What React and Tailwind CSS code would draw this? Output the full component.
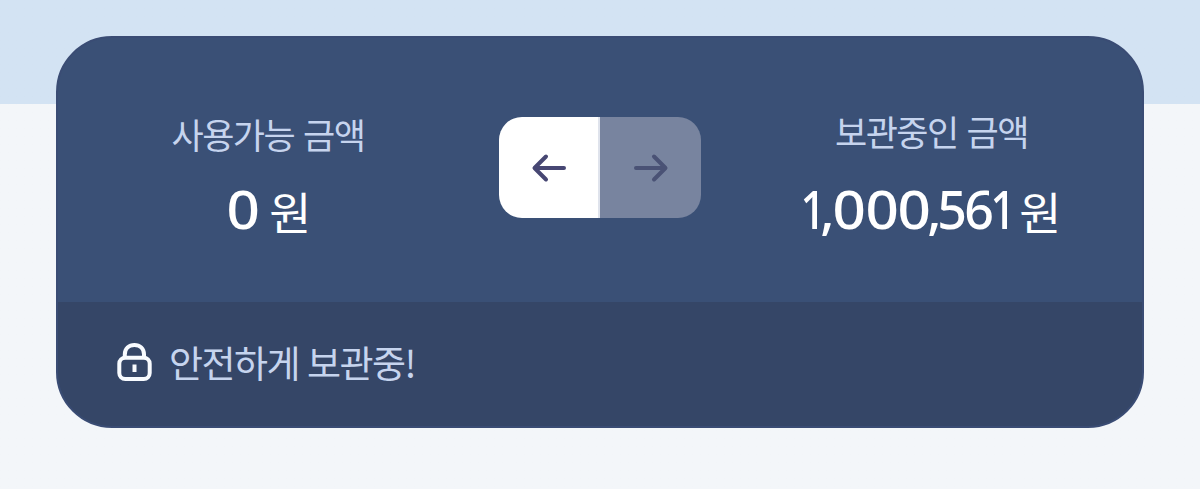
import React from "react"

const ArrowLeft = () => (
  <svg width="36" height="30" viewBox="0 0 36 30" fill="none" stroke="currentColor" strokeWidth="4" strokeLinecap="round" strokeLinejoin="round">
    <path d="M15 3.5 L3.5 15 L15 26.5 M4 15 H33" />
  </svg>
)

const ArrowRight = () => (
  <svg width="36" height="30" viewBox="0 0 36 30" fill="none" stroke="currentColor" strokeWidth="4" strokeLinecap="round" strokeLinejoin="round">
    <path d="M21 3.5 L32.5 15 L21 26.5 M32 15 H3" />
  </svg>
)

const LockIcon = () => (
  <svg width="36" height="40" viewBox="0 0 36 40" fill="none" stroke="currentColor" strokeWidth="4">
    <path d="M7.8 15 V12.5 C7.8 6.5 12 3 17.4 3 S27 6.5 27 12.5 V15" />
    <rect x="2.3" y="15.7" width="30.4" height="21.3" rx="6" />
    <path d="M17.5 22.5 V30" />
  </svg>
)

const Digit = ({ children, className }) => (
  <span className={`${className} flex justify-center`}>
    <span className={children === "0" ? "scale-x-[1.1]" : children === "1" ? "scale-x-[0.85]" : "scale-x-[0.98]"}>{children}</span>
  </span>
)

const Balance = ({ label, children, className, labelClass, amountClass }) => (
  <div className={className}>
    <div className={`${labelClass} text-center text-[35px] leading-[40px] tracking-[-1.5px] [word-spacing:2.5px] text-[#c6d4ee]`}>{label}</div>
    <div className={`${amountClass} flex h-[64px] items-baseline justify-center leading-[64px] text-white`}>{children}</div>
  </div>
)

const App = () => {
  return (
    <div className="h-[489px] w-[1200px] overflow-hidden bg-linear-to-b from-[#d3e3f3] from-[104px] to-[#f3f6f9] to-[104px] px-14 pt-9 font-['Noto_Sans_CJK_KR',sans-serif] whitespace-nowrap">
      <div className="h-[392px] overflow-hidden rounded-[56px] border-2 border-[#3a4c74] bg-[#3a5076]">

        {/* Balances */}
        <div className="flex h-[264px]">
          <Balance
            label="사용가능 금액"
            className="w-[441px] pt-[76px]"
            labelClass="mb-[23px] pr-[21px]"
            amountClass="pr-[17px]"
          >
            <div className="flex font-['Noto_Sans'] text-[53px] font-medium">
              <Digit className="w-[28px]">0</Digit>
            </div>
            <span className="relative top-px ml-[13px] scale-x-[1.04] text-[44px]">원</span>
          </Balance>

          {/* Transfer direction */}
          <div className="mt-[79px] flex h-[101px] w-[202px] overflow-hidden rounded-[23px]">
            <button className="flex w-[101px] items-center justify-center border-r-2 border-[#dfe3ec] bg-white text-[#474773]">
              <ArrowLeft />
            </button>
            <button className="flex w-[101px] items-center justify-center bg-[#78849f] text-[#4a5275]">
              <ArrowRight />
            </button>
          </div>

          <Balance
            label="보관중인 금액"
            className="w-[441px] pt-[73px]"
            labelClass="mb-[26px] pl-[20px]"
            amountClass="pl-[25px]"
          >
            <div className="flex font-['Noto_Sans'] text-[53px] font-medium">
              <Digit className="w-[12px]">1</Digit>
              <Digit className="w-[16px]">,</Digit>
              <Digit className="w-[28px]">0</Digit>
              <Digit className="w-[37px]">0</Digit>
              <Digit className="w-[28px]">0</Digit>
              <Digit className="w-[11px]">,</Digit>
              <Digit className="w-[25px]">5</Digit>
              <Digit className="w-[30px]">6</Digit>
              <Digit className="w-[18px]">1</Digit>
            </div>
            <span className="relative top-px ml-[8px] scale-x-[1.04] text-[44px]">원</span>
          </Balance>
        </div>

        {/* Status */}
        <div className="flex h-[124px] bg-[#354667] pl-[59px]">
          <span className="pt-[40px] text-[#f8fbff]"><LockIcon /></span>
          <span className="ml-[16px] pt-[32px] text-[37px] leading-[56px] tracking-[-1.5px] [word-spacing:1px] text-[#c6d4ee]">안전하게 보관중!</span>
        </div>

      </div>
    </div>
  )
}

export default App
